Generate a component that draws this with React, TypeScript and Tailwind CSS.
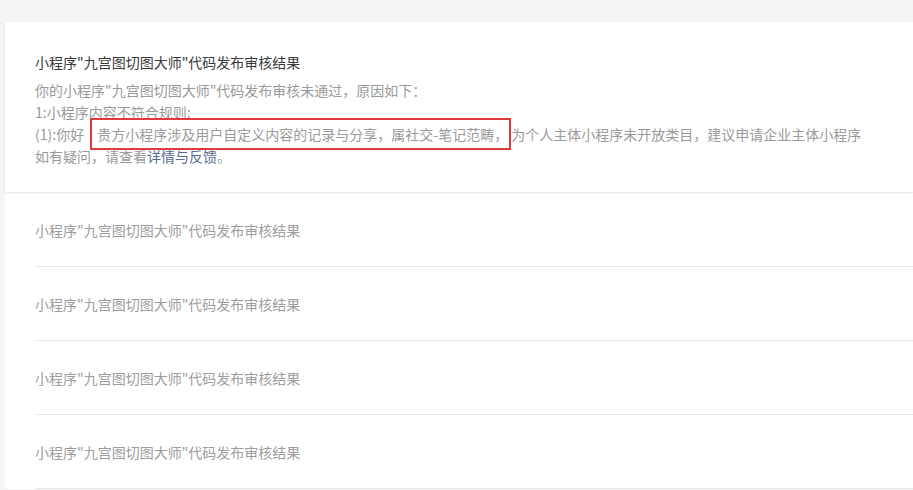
const font = { fontFamily: '"Noto Sans CJK SC", "Noto Sans", sans-serif' };

const title = '小程序"九宫图切图大师"代码发布审核结果';

// Collapsed notice rows under the expanded card
const rows = [1, 2, 3, 4];

export default function App() {
  return (
    <div
      className="min-h-screen bg-[#f4f5f7] pl-[5px] pt-[22px] text-[14px] leading-[22px]"
      style={font}
    >
      {/* Expanded notice */}
      <div className="relative z-10 bg-white px-[30px] pt-[29px] pb-[25px] shadow-[0_1px_4px_rgba(0,0,0,0.08)]">
        <h3 className="text-[#3a3a3a]">{title}</h3>
        <div className="mt-[6px] text-[#9a9a9a]">
          <p>你的小程序"九宫图切图大师"代码发布审核未通过，原因如下：</p>
          <p>1:小程序内容不符合规则:</p>
          <p className="whitespace-nowrap">
            (1):你好{" "}
            <span className="ml-[3px] border-2 border-[#e0393e] py-[4px] pl-[5px] pr-[1px]">
              贵方小程序涉及用户自定义内容的记录与分享，属社交-笔记范畴，
            </span>
            为个人主体小程序未开放类目，建议申请企业主体小程序
          </p>
          <p>
            如有疑问，请查看<span className="text-[#576b95]">详情与反馈</span>。
          </p>
        </div>
      </div>

      {/* Collapsed list */}
      <div className="mt-[1px] bg-white pl-[30px]">
        {rows.map((r) => (
          <div
            key={r}
            className="border-b border-[#e6e6e6] pt-[26px] pb-[25px] text-[#9d9d9d]"
          >
            {title}
          </div>
        ))}
      </div>
    </div>
  );
}
